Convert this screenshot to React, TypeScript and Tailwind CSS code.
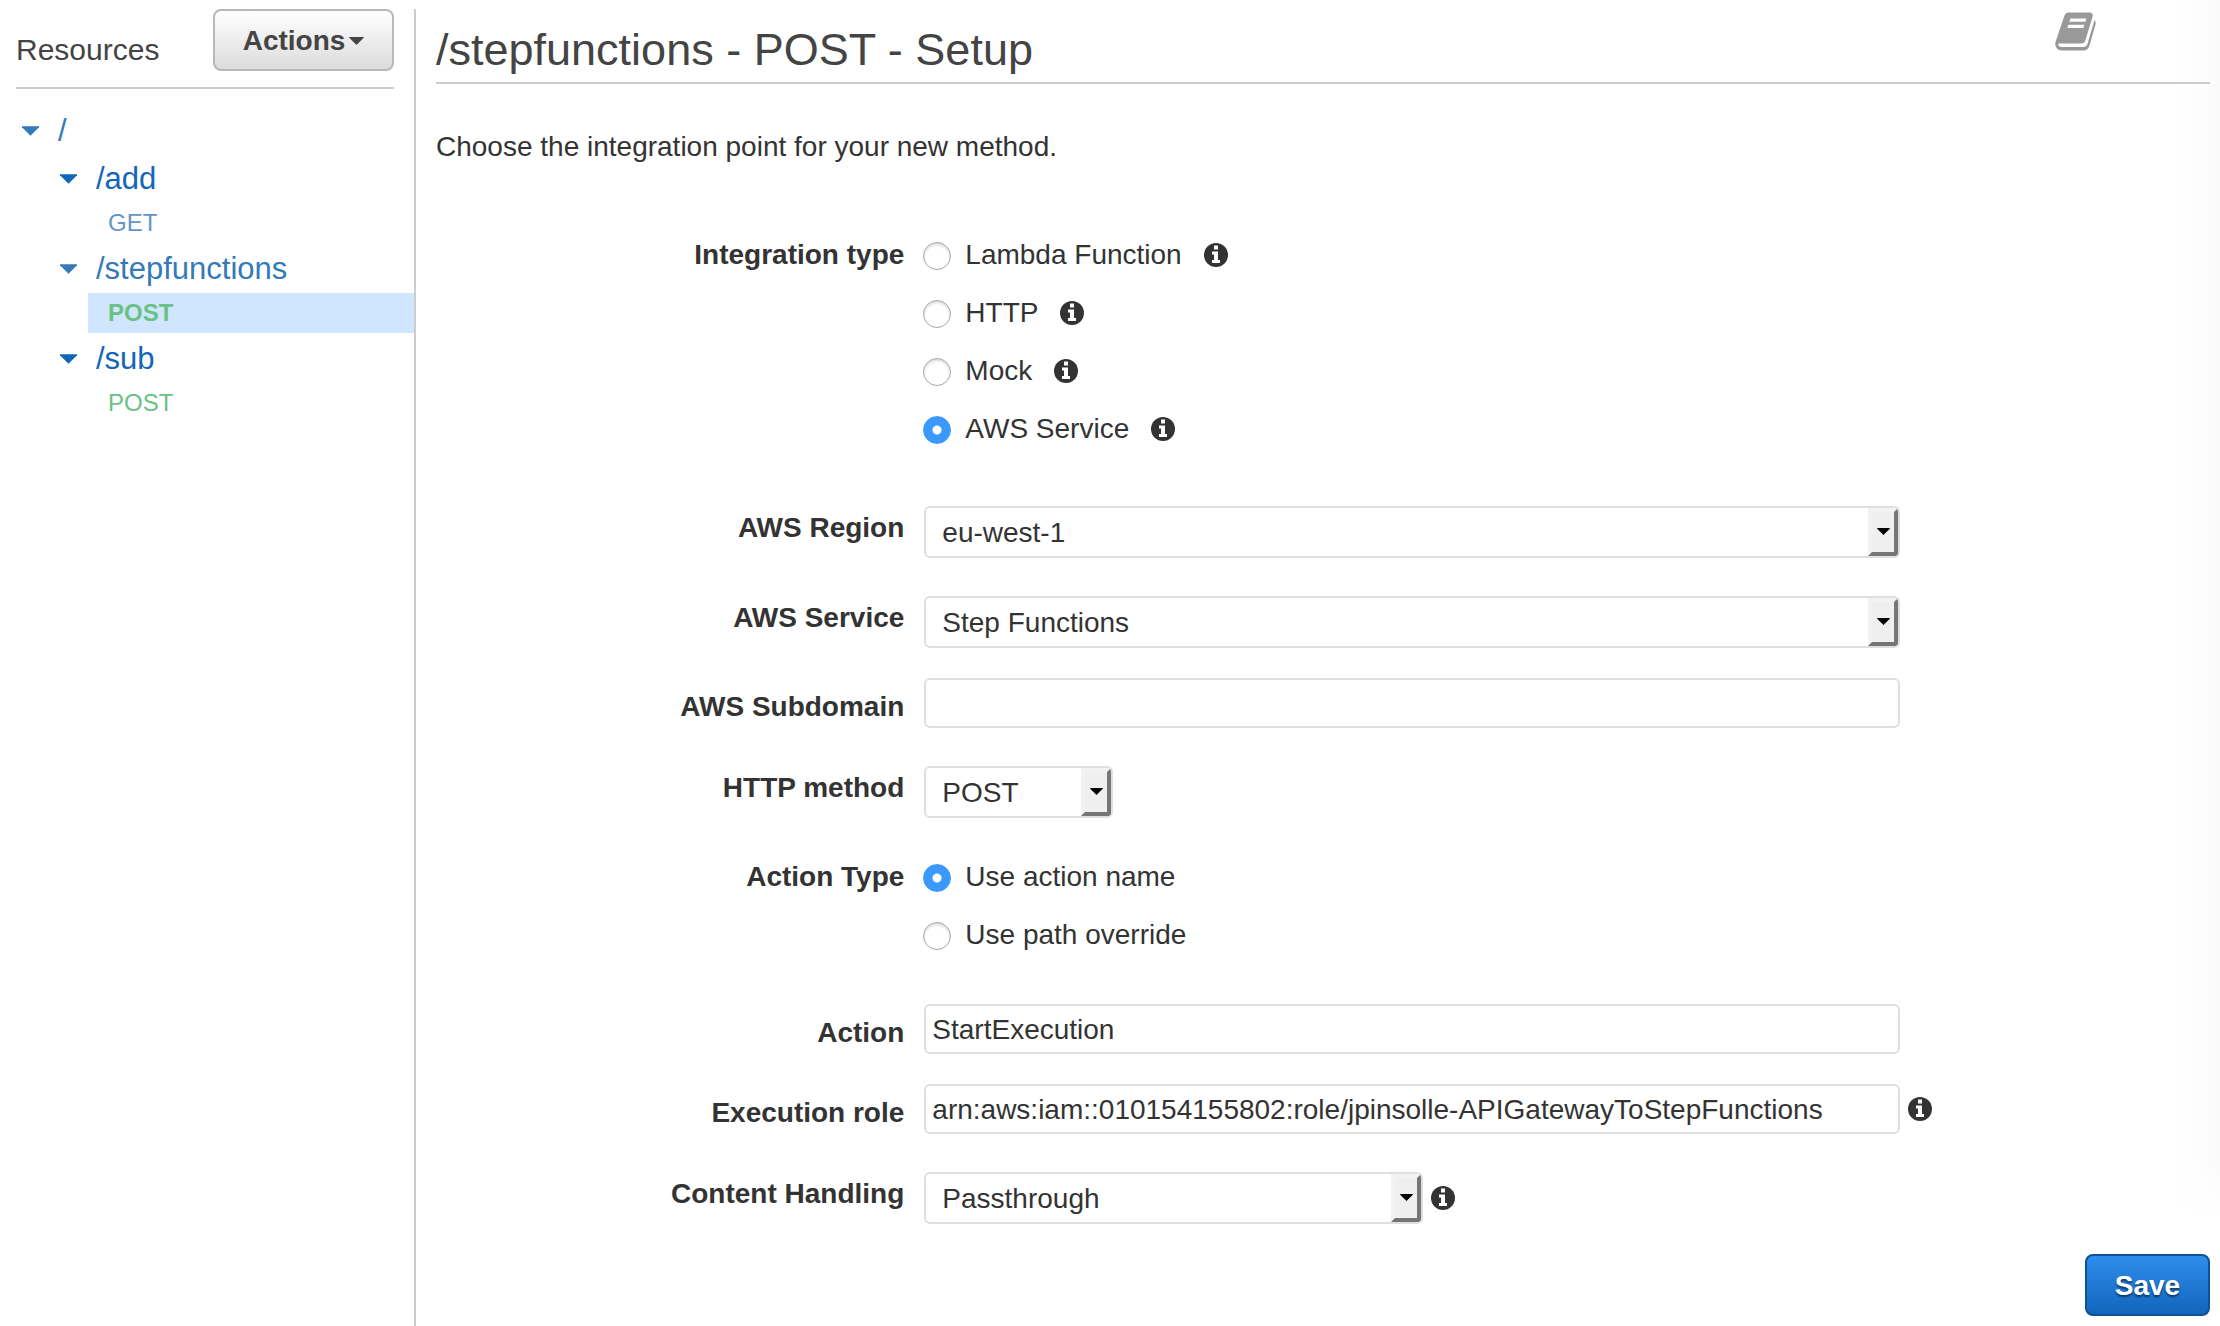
import { useState } from "react";
import type { ReactNode } from "react";

const methodColors = {
  GET: "text-[#6594c5]",
  POST: "text-[#69c184]",
};

function InfoIcon() {
  return (
    <button type="button" aria-label="More information" className="shrink-0">
      <svg viewBox="0 0 24 24" className="size-6" aria-hidden="true">
        <circle cx="12" cy="12" r="12" fill="#333" />
        <path d="M10 2.500h4v4h-4z M8 8.500h6v8.500h2v3H8v-3h2v-5.500H8z" fill="#fff" />
      </svg>
    </button>
  );
}

function BookIcon() {
  return (
    <svg viewBox="0 0 41 39" className="h-[39px] w-[41px]" aria-hidden="true">
      <path
        fillRule="evenodd"
        fill="#999"
        d="M13 .5H34.500Q38.500 .5 37.500 5L30.500 28Q29.500 31.500 26 31.500H4.500Q2.700 31.500 3.300 33Q4 35 6.500 35H28.500Q31.500 35 32.500 32L39 9.500Q39.400 8.800 39 8Q41.300 9.500 40.500 12.500L34.500 33.500Q33 38.500 28.500 38.500H7Q2 38.500 .6 34Q-.2 31 1 28.500L9.500 3.500Q10.500 .7 13 .5ZM15.500 6.500L14.300 9.800H30.300L31.300 6.500ZM13.500 12.800L12.300 16H28.300L29.300 12.800Z"
      />
    </svg>
  );
}

function Caret({ className }: { className: string }) {
  return (
    <svg viewBox="0 0 18 10" className={className} aria-hidden="true">
      <path d="M0 0H18V1L9 10L0 1Z" fill="currentColor" />
    </svg>
  );
}

function Resource({ path, color, children }: { path: string; color: string; children?: ReactNode }) {
  return (
    <li>
      <a href="#" className={`flex h-12 items-center gap-[19px] pl-[22px] ${color}`}>
        <Caret className="h-[10px] w-[17px]" />
        {path}
      </a>
      {children && <ul className="pl-[38px]">{children}</ul>}
    </li>
  );
}

function Method({ name, selected = false }: { name: "GET" | "POST"; selected?: boolean }) {
  return (
    <li className="pb-[2px] pl-3">
      <a
        href="#"
        className={`block pl-5 text-[24px] leading-[40px] ${methodColors[name]} ${selected ? "bg-[#d0e6ff] font-bold" : ""}`}
      >
        {name}
      </a>
    </li>
  );
}

function Row({ label, htmlFor, className, labelClass = "pt-px", children }: {
  label: string;
  htmlFor: string;
  className: string;
  labelClass?: string;
  children: ReactNode;
}) {
  return (
    <div className={`flex items-start gap-5 ${className}`}>
      <label htmlFor={htmlFor} className={`w-[26.4%] shrink-0 text-right font-bold ${labelClass}`}>
        {label}
      </label>
      <div className="flex min-w-0 flex-1 items-center gap-2">{children}</div>
    </div>
  );
}

function Select({ id, value, width }: { id: string; value: string; width: string }) {
  return (
    <div className={`relative ${width}`}>
      <select
        id={id}
        defaultValue={value}
        className="block h-[52px] w-full appearance-none rounded-md border-2 border-[#dfdfdf] bg-white pt-[2px] pr-9 pl-4"
      >
        <option>{value}</option>
      </select>
      <span className="pointer-events-none absolute inset-y-[2px] right-[2px] flex w-[30px] items-center justify-center rounded-r-sm border-4 border-t-[#f2f2f2] border-r-[#767676] border-b-[#767676] border-l-[#f2f2f2] bg-[#efefef] pb-[2px] text-black">
        <Caret className="h-[7px] w-[13px]" />
      </span>
    </div>
  );
}

function TextInput({ id, value }: { id: string; value: string }) {
  return (
    <input
      id={id}
      type="text"
      defaultValue={value}
      className="block h-[50px] w-[75.9%] rounded-md border-2 border-[#dfdfdf] bg-white px-[6px] pt-[2px]"
    />
  );
}

function RadioGroup({ name, label, options, initial, info = false, className }: {
  name: string;
  label: string;
  options: string[];
  initial: string;
  info?: boolean;
  className: string;
}) {
  const [selected, setSelected] = useState(initial);
  return (
    <div role="radiogroup" aria-labelledby={`${name}-label`} className={`flex items-start gap-[19px] ${className}`}>
      <span id={`${name}-label`} className="w-[26.4%] shrink-0 text-right font-bold">
        {label}
      </span>
      <div className="flex flex-col gap-4">
        {options.map((option) => (
          <div key={option} className="flex items-center gap-[22px]">
            <label className="flex items-center gap-[14px]">
              <input
                type="radio"
                name={name}
                checked={selected === option}
                onChange={() => setSelected(option)}
                className="mt-[2px] size-7 appearance-none rounded-full border border-[#a8a8a8] bg-white shadow-[inset_0_2px_3px_#00000026] checked:border-[#3b99fc] checked:bg-[radial-gradient(circle,#fff_4px,#3b99fc_5px)] checked:shadow-none"
              />
              {option}
            </label>
            {info && <InfoIcon />}
          </div>
        ))}
      </div>
    </div>
  );
}

export default function App() {
  return (
    <div className="flex min-h-screen bg-white font-['Liberation_Sans',Arial,sans-serif] text-[28px] leading-[42px] text-[#333]">
      <aside className="mt-[9px] w-[416px] shrink-0 border-r-2 border-[#ccc]">
        <div className="mr-5 ml-4 flex h-20 items-start justify-between border-b-2 border-[#ccc]">
          <h2 className="pt-5 text-[30px] text-[#444]">Resources</h2>
          <button
            type="button"
            className="flex h-[62px] w-[181px] items-center justify-center gap-1 rounded-lg border-2 border-[#b8b8b8] bg-linear-to-b from-white to-[#dcdcdc] pt-[2px] font-bold text-[#444]"
          >
            Actions
            <Caret className="h-2 w-[15px]" />
          </button>
        </div>
        <nav aria-label="Resources" className="pt-[18px] text-[31px]">
          <ul>
            <Resource path="/" color="text-[#337ab7]">
              <Resource path="/add" color="text-[#1166bb]">
                <Method name="GET" />
              </Resource>
              <Resource path="/stepfunctions" color="text-[#337ab7]">
                <Method name="POST" selected />
              </Resource>
              <Resource path="/sub" color="text-[#1166bb]">
                <Method name="POST" />
              </Resource>
            </Resource>
          </ul>
        </nav>
      </aside>

      <main className="flex min-w-0 flex-1 flex-col bg-[linear-gradient(to_top,#fff_8%,#fff0_14%),linear-gradient(to_left,#f9f9f9,#fdfdfd_20px,#fff_48px)] pr-[10px] pb-[10px] pl-5">
        <header className="flex items-start justify-between border-b-2 border-[#ccc] pt-5">
          <h1 className="pb-[2px] text-[45px] leading-[60px] text-[#444]">/stepfunctions - POST - Setup</h1>
          <button type="button" aria-label="Documentation" className="-mt-2 mr-[114px]">
            <BookIcon />
          </button>
        </header>
        <p className="pt-[42px]">Choose the integration point for your new method.</p>

        <form className="flex flex-1 flex-col" onSubmit={(event) => event.preventDefault()}>
          <RadioGroup
            name="integration-type"
            label="Integration type"
            options={["Lambda Function", "HTTP", "Mock", "AWS Service"]}
            initial="AWS Service"
            info
            className="mt-[66px]"
          />
          <Row label="AWS Region" htmlFor="region" className="mt-14">
            <Select id="region" value="eu-west-1" width="w-[75.9%]" />
          </Row>
          <Row label="AWS Service" htmlFor="service" className="mt-[38px]">
            <Select id="service" value="Step Functions" width="w-[75.9%]" />
          </Row>
          <Row label="AWS Subdomain" htmlFor="subdomain" className="mt-[30px]" labelClass="pt-2">
            <TextInput id="subdomain" value="" />
          </Row>
          <Row label="HTTP method" htmlFor="http-method" className="mt-[38px]">
            <Select id="http-method" value="POST" width="w-[189px]" />
          </Row>
          <RadioGroup
            name="action-type"
            label="Action Type"
            options={["Use action name", "Use path override"]}
            initial="Use action name"
            className="mt-[38px]"
          />
          <Row label="Action" htmlFor="action" className="mt-12" labelClass="pt-2">
            <TextInput id="action" value="StartExecution" />
          </Row>
          <Row label="Execution role" htmlFor="role" className="mt-[30px]" labelClass="pt-2">
            <TextInput id="role" value="arn:aws:iam::010154155802:role/jpinsolle-APIGatewayToStepFunctions" />
            <InfoIcon />
          </Row>
          <Row label="Content Handling" htmlFor="content-handling" className="mt-[38px]">
            <Select id="content-handling" value="Passthrough" width="w-[499px]" />
            <InfoIcon />
          </Row>
          <div className="mt-auto flex justify-end pt-6">
            <button
              type="submit"
              className="h-[62px] w-[125px] rounded-lg border-2 border-[#0d509b] bg-linear-to-b from-[#2f8ded] to-[#1166bb] pt-[2px] font-bold text-white text-shadow-[0_2px_2px_#00000080]"
            >
              Save
            </button>
          </div>
        </form>
      </main>
    </div>
  );
}
